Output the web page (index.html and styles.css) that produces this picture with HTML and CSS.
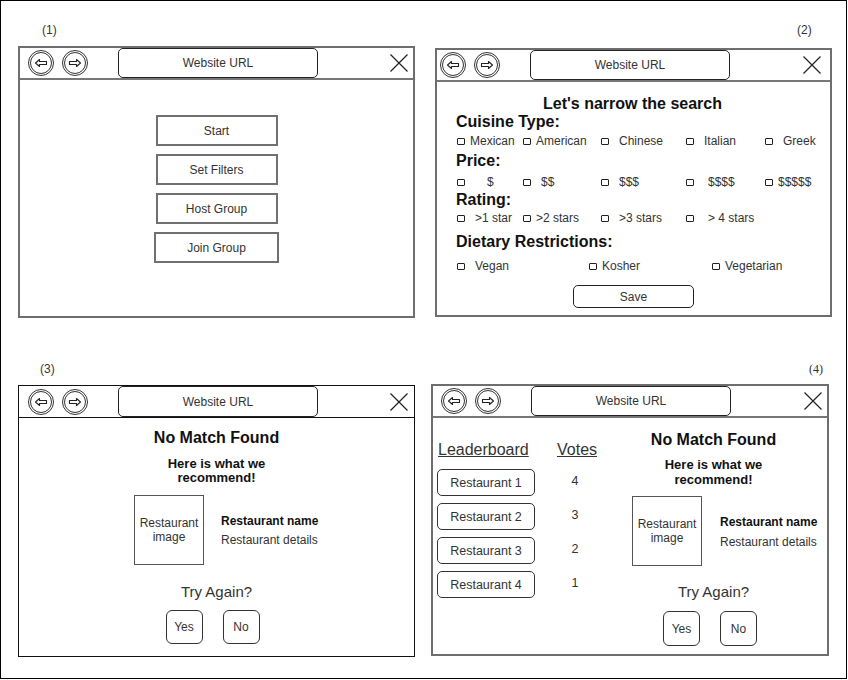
FILE: index.html
```html
<!DOCTYPE html>
<html lang="en">
<head>
    <meta charset="UTF-8">
    <meta name="viewport" content="width=device-width, initial-scale=1.0">
    <link rel="stylesheet" href="styles.css">
    <title>Restaurant Picker Wireframes</title>
</head>
<body>
    <!-- shared browser chrome icons -->
    <svg class="defs" width="0" height="0" aria-hidden="true">
        <symbol id="back" viewBox="0 0 26 26">
            <circle cx="13" cy="13" r="12.5" fill="none" stroke="#333" stroke-width="1"/>
            <circle cx="13" cy="13" r="10.5" fill="none" stroke="#333" stroke-width="1"/>
            <path d="M7.5 13 L11.5 9.5 V11.5 H18.5 V14.5 H11.5 V16.5 Z" fill="none" stroke="#222" stroke-width="1.1" stroke-linejoin="round"/>
        </symbol>
        <symbol id="fwd" viewBox="0 0 26 26">
            <circle cx="13" cy="13" r="12.5" fill="none" stroke="#333" stroke-width="1"/>
            <circle cx="13" cy="13" r="10.5" fill="none" stroke="#333" stroke-width="1"/>
            <path d="M18.5 13 L14.5 9.5 V11.5 H7.5 V14.5 H14.5 V16.5 Z" fill="none" stroke="#222" stroke-width="1.1" stroke-linejoin="round"/>
        </symbol>
        <symbol id="cross" viewBox="0 0 18 18">
            <path d="M0.5 0.5 L17.5 17.5 M17.5 0.5 L0.5 17.5" stroke="#222" stroke-width="1.2"/>
        </symbol>
    </svg>

    <div class="board">
        <span class="tag tag-1">(1)</span>
        <span class="tag tag-2">(2)</span>
        <span class="tag tag-3">(3)</span>
        <span class="tag tag-4">(4)</span>

        <!-- (1) home -->
        <section class="window win-1">
            <div class="bar">
                <svg class="nav"><use href="#back"/></svg>
                <svg class="nav"><use href="#fwd"/></svg>
                <div class="url">Website URL</div>
                <svg class="close"><use href="#cross"/></svg>
            </div>
            <div class="menu">
                <div class="menu-btn">Start</div>
                <div class="menu-btn">Set Filters</div>
                <div class="menu-btn">Host Group</div>
                <div class="menu-btn join">Join Group</div>
            </div>
        </section>

        <!-- (2) filters -->
        <section class="window win-2">
            <div class="bar">
                <svg class="nav"><use href="#back"/></svg>
                <svg class="nav"><use href="#fwd"/></svg>
                <div class="url">Website URL</div>
                <svg class="close"><use href="#cross"/></svg>
            </div>
            <div class="filters">
                <h2 class="filters-title">Let's narrow the search</h2>
                <h3 class="group">Cuisine Type:</h3>
                <div class="opts opts-1">
                    <label class="opt"><i class="box"></i><span>Mexican</span></label>
                    <label class="opt"><i class="box"></i><span>American</span></label>
                    <label class="opt"><i class="box"></i><span class="wide">Chinese</span></label>
                    <label class="opt"><i class="box"></i><span class="wide">Italian</span></label>
                    <label class="opt"><i class="box"></i><span class="wide">Greek</span></label>
                </div>
                <h3 class="group group-price">Price:</h3>
                <div class="opts opts-2">
                    <label class="opt"><i class="box"></i><span class="widest">$</span></label>
                    <label class="opt"><i class="box"></i><span class="wide">$$</span></label>
                    <label class="opt"><i class="box"></i><span class="wide">$$$</span></label>
                    <label class="opt"><i class="box"></i><span class="wider">$$$$</span></label>
                    <label class="opt"><i class="box"></i><span>$$$$$</span></label>
                </div>
                <h3 class="group group-rating">Rating:</h3>
                <div class="opts opts-3">
                    <label class="opt"><i class="box"></i><span class="wide">&gt;1 star</span></label>
                    <label class="opt"><i class="box"></i><span>&gt;2 stars</span></label>
                    <label class="opt"><i class="box"></i><span class="wide">&gt;3 stars</span></label>
                    <label class="opt"><i class="box"></i><span class="wider">&gt; 4 stars</span></label>
                </div>
                <h3 class="group group-diet">Dietary Restrictions:</h3>
                <div class="opts opts-diet">
                    <label class="opt"><i class="box"></i><span class="wide">Vegan</span></label>
                    <label class="opt"><i class="box"></i><span>Kosher</span></label>
                    <label class="opt"><i class="box"></i><span>Vegetarian</span></label>
                </div>
                <div class="save">Save</div>
            </div>
        </section>

        <!-- (3) no match -->
        <section class="window win-3">
            <div class="bar">
                <svg class="nav"><use href="#back"/></svg>
                <svg class="nav"><use href="#fwd"/></svg>
                <div class="url">Website URL</div>
                <svg class="close"><use href="#cross"/></svg>
            </div>
            <div class="rec">
                <h2 class="rec-title">No Match Found</h2>
                <p class="rec-sub">Here is what we<br>recommend!</p>
                <div class="pick">
                    <div class="pic">Restaurant<br>image</div>
                    <div class="pick-info">
                        <div class="pick-name">Restaurant name</div>
                        <div class="pick-text">Restaurant details</div>
                    </div>
                </div>
                <p class="again">Try Again?</p>
                <div class="answers">
                    <div class="answer">Yes</div>
                    <div class="answer">No</div>
                </div>
            </div>
        </section>

        <!-- (4) group result -->
        <section class="window win-4">
            <div class="bar">
                <svg class="nav"><use href="#back"/></svg>
                <svg class="nav"><use href="#fwd"/></svg>
                <div class="url">Website URL</div>
                <svg class="close"><use href="#cross"/></svg>
            </div>
            <div class="split">
                <div class="leaders">
                    <div class="leaders-head">Leaderboard</div>
                    <div class="leaders-head votes">Votes</div>
                    <div class="spot">Restaurant 1</div><div class="count">4</div>
                    <div class="spot">Restaurant 2</div><div class="count">3</div>
                    <div class="spot">Restaurant 3</div><div class="count">2</div>
                    <div class="spot">Restaurant 4</div><div class="count">1</div>
                </div>
                <div class="rec">
                    <h2 class="rec-title">No Match Found</h2>
                    <p class="rec-sub">Here is what we<br>recommend!</p>
                    <div class="pick">
                        <div class="pic">Restaurant<br>image</div>
                        <div class="pick-info">
                            <div class="pick-name">Restaurant name</div>
                            <div class="pick-text">Restaurant details</div>
                        </div>
                    </div>
                    <p class="again">Try Again?</p>
                    <div class="answers">
                        <div class="answer">Yes</div>
                        <div class="answer">No</div>
                    </div>
                </div>
            </div>
        </section>
    </div>
</body>
</html>
```

FILE: styles.css
```css
* {
    margin: 0;
    padding: 0;
    box-sizing: border-box;
}

body {
    font-family: 'Liberation Sans', Arial, sans-serif;
    font-size: 12px;
    color: #222;
    background-color: #fff;
}

.defs {
    position: absolute;
}

/* whole drawing canvas */
.board {
    position: relative;
    width: 847px;
    height: 679px;
    border: 1px solid #000;
}

.tag {
    position: absolute;
    font-size: 12px;
    line-height: 14px;
    color: #333;
}

.tag-1 { left: 41px; top: 22px; }
.tag-2 { left: 796px; top: 22px; }
.tag-3 { left: 39px; top: 361px; }
.tag-4 { left: 808px; top: 361px; font-family: 'Liberation Serif', serif; }

/* browser windows placed on the canvas */
.window {
    position: absolute;
    display: flex;
    flex-direction: column;
    border: 2px solid #6e6e6e;
    background-color: #fff;
}

.win-1 { left: 17px; top: 45px; width: 397px; height: 272px; }
.win-2 { left: 434px; top: 47px; width: 397px; height: 269px; }
.win-3 { left: 17px; top: 384px; width: 397px; height: 272px; border: 1px solid #111; }
.win-4 { left: 430px; top: 383px; width: 398px; height: 272px; }

.bar {
    display: flex;
    align-items: center;
    height: 32px;
    padding: 0 5px 0 8px;
    border-bottom: 2px solid #777;
    flex: none;
}

.win-2 .bar { padding: 0 9px 0 3px; }
.win-3 .bar { padding: 0 6px 0 9px; border-bottom: 1px solid #111; }

.nav {
    width: 26px;
    height: 26px;
    flex: none;
}

.nav + .nav {
    margin-left: 8px;
}

.url {
    align-self: stretch;
    width: 200px;
    margin-left: 30px;
    border: 1px solid #222;
    border-radius: 5px;
    display: flex;
    align-items: center;
    justify-content: center;
    font-size: 12px;
    color: #333;
}

.close {
    margin-left: auto;
    width: 18px;
    height: 18px;
    flex: none;
}

/* (1) */
.menu {
    display: flex;
    flex-direction: column;
    align-items: center;
    gap: 8px;
    padding-top: 35px;
}

.menu-btn {
    width: 122px;
    height: 31px;
    border: 2px solid #707070;
    display: flex;
    align-items: center;
    justify-content: center;
    color: #333;
}

.menu-btn.join {
    width: 125px;
}

/* (2) */
.filters {
    display: flex;
    flex-direction: column;
    padding: 13px 0 0 20px;
}

.filters-title {
    font-size: 16px;
    line-height: 18px;
    text-align: center;
    margin-left: -22px;
    color: #111;
}

.group {
    font-size: 16px;
    line-height: 18px;
    color: #111;
    margin-left: -1px;
}

.group-price { margin-top: 3px; }
.group-rating { margin-top: 1px; }
.group-diet { margin-top: 7px; }

.opts {
    display: grid;
    grid-template-columns: 66px 78px 85px 79px auto;
    height: 16px;
    align-items: center;
    margin-top: 2px;
}

.opts-2 { margin-top: 4px; }
.opts-3 { margin-top: 1px; }

.opts-diet {
    grid-template-columns: 132px 123px auto;
    margin-top: 7px;
}

.opt {
    display: flex;
    align-items: center;
    font-size: 12px;
    color: #333;
    white-space: nowrap;
}

.box {
    width: 8px;
    height: 7px;
    border: 1px solid #222;
    border-radius: 1px;
    flex: none;
}

.opt span { margin-left: 5px; }
.opt .wide { margin-left: 10px; }
.opt .wider { margin-left: 14px; }
.opt .widest { margin-left: 22px; }

.save {
    align-self: center;
    margin: 11px 0 0 -20px;
    width: 121px;
    height: 23px;
    border: 1px solid #222;
    border-radius: 5px;
    display: flex;
    align-items: center;
    justify-content: center;
    color: #333;
}

/* (3) and (4) recommendation */
.rec {
    display: flex;
    flex-direction: column;
    align-items: center;
    padding-top: 11px;
}

.rec-title {
    font-size: 16px;
    line-height: 18px;
    color: #111;
}

.rec-sub {
    margin-top: 10px;
    font-size: 13px;
    font-weight: bold;
    line-height: 14px;
    text-align: center;
    color: #111;
}

.pick {
    display: flex;
    align-self: flex-start;
    margin: 10px 0 0 115px;
}

.pic {
    width: 70px;
    height: 70px;
    border: 1px solid #555;
    display: flex;
    align-items: center;
    justify-content: center;
    text-align: center;
    line-height: 14px;
    color: #333;
}

.pick-info {
    margin-left: 17px;
    padding-top: 18px;
    line-height: 16px;
    color: #333;
}

.pick-name {
    font-weight: bold;
    color: #111;
}

.pick-text {
    margin-top: 3px;
}

.again {
    margin-top: 18px;
    font-size: 15px;
    line-height: 18px;
    color: #333;
}

.answers {
    display: flex;
    gap: 20px;
    margin: 9px 0 0 -8px;
}

.answer {
    width: 37px;
    height: 34px;
    border: 1px solid #333;
    border-radius: 6px;
    display: flex;
    align-items: center;
    justify-content: center;
    color: #333;
}

/* (4) */
.split {
    display: flex;
}

.leaders {
    width: 167px;
    flex: none;
    display: grid;
    grid-template-columns: 98px 40px;
    grid-template-rows: 21px;
    grid-auto-rows: 27px;
    column-gap: 22px;
    row-gap: 7px;
    padding: 23px 0 0 4px;
    align-items: center;
    align-content: start;
}

.leaders-head {
    font-size: 16px;
    line-height: 18px;
    text-decoration: underline;
    color: #333;
    align-self: start;
    padding-left: 1px;
}

.leaders-head.votes {
    text-align: center;
    padding-left: 0;
}

.spot {
    height: 27px;
    border: 1px solid #333;
    border-radius: 5px;
    display: flex;
    align-items: center;
    justify-content: center;
    font-size: 12.5px;
    color: #333;
}

.count {
    text-align: center;
    font-size: 12.5px;
    color: #333;
    padding-right: 4px;
    margin-top: -4px;
}

.split .rec {
    flex: 1;
    padding-top: 13px;
}

.split .rec-sub {
    margin-top: 8px;
    line-height: 15px;
}

.split .pick {
    margin: 9px 0 0 32px;
}

.split .pick-info {
    margin-left: 18px;
}

.split .pick-text {
    margin-top: 4px;
}

.split .again {
    margin-top: 17px;
}

.split .answers {
    margin: 10px 0 0 -7px;
}

.split .answer {
    height: 35px;
}
```
